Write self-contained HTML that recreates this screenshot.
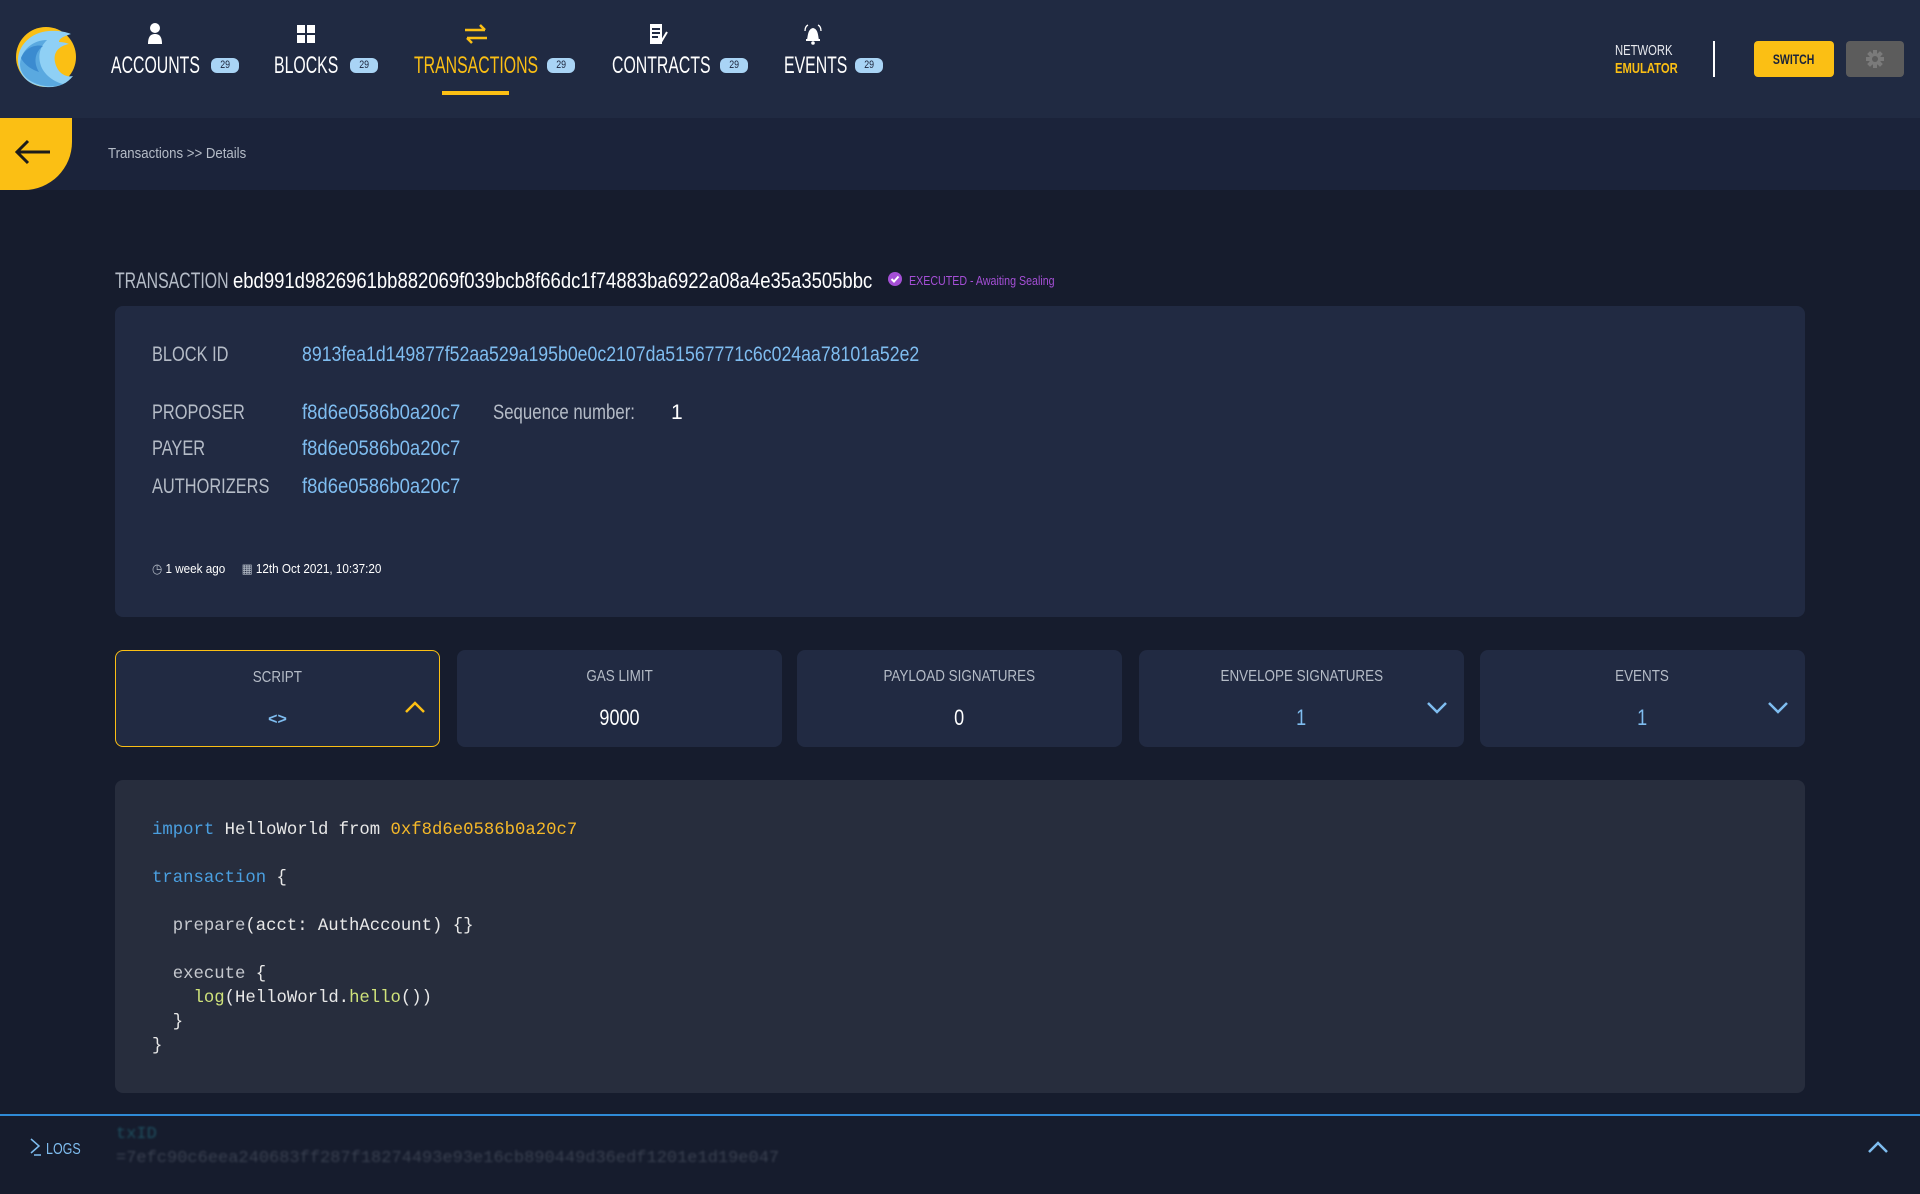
<!DOCTYPE html>
<html><head><meta charset="utf-8">
<style>
*{margin:0;padding:0;box-sizing:border-box}
body{width:1920px;height:1194px;background:#161c2d;overflow:hidden;position:relative;font-family:"Liberation Sans",sans-serif;color:#fff}
.abs{position:absolute;white-space:nowrap}
.s{display:inline-block;transform-origin:left center;white-space:nowrap}
.c{display:inline-block;transform-origin:center center;white-space:nowrap}
.hdr{left:0;top:0;width:1920px;height:118px;background:#202a42}
.bc{left:0;top:118px;width:1920px;height:72px;background:#1b233a}
.nav{top:52px;font-size:24px;color:#fff}
.nav .s{transform:scaleX(.66)}
.bd{top:58px;width:28px;height:15px;background:#a9d4f5;color:#1b233a;font-size:11px;border-radius:6px;text-align:center;line-height:15px}
.bd span{display:inline-block;transform:scaleX(.8)}
.ico{top:22px}
.card{background:#212a42;border-radius:8px}
.lbl{color:#b5bcc7;font-size:21px}
.lbl .s{transform:scaleX(.78)}
.val{color:#7fbdf0;font-size:21px}
.val .s{transform:scaleX(.88)}
.tab{top:650px;width:325px;height:97px;background:#212a42;border-radius:8px;text-align:center}
.tab .t{position:absolute;top:18px;width:100%;color:#b5bcc7;font-size:16px}
.tab .t .c{transform:scaleX(.84)}
.tab .v{position:absolute;top:55px;width:100%;font-size:22px}
.tab .v .c{transform:scaleX(.82)}
.code{font-family:"Liberation Mono","DejaVu Sans Mono",monospace;font-size:17.3px;color:#e8e8e8;line-height:24px;white-space:pre}
.kw{color:#4a9fe0}.st{color:#f5b829}.fn{color:#cfe27a}.dim{color:#c5c8ce}
</style></head><body>
<div class="abs hdr"></div>
<div class="abs bc"></div>
<svg class="abs" style="left:15px;top:26px" width="62" height="62" viewBox="0 0 62 62">
<circle cx="31" cy="31" r="30" fill="#fbbf14"/>
<path d="M3 36 C2 20 16 6 34 5 C48 4 56 8 56 8 C50 10 44 12 44 16 C50 16 54 18 54 18 C44 20 38 26 40 36 C42 46 50 52 58 50 C52 58 42 62 31 61 C14 60 4 50 3 36Z" fill="#8fd0f5"/>
<path d="M5 38 C6 24 18 14 32 14 C26 20 22 28 26 40 C30 50 40 56 48 58 C40 62 24 61 14 54 C8 50 5 44 5 38Z" fill="#5aa9e0"/>
<path d="M6 32 C10 22 20 18 28 20 C20 26 18 36 24 46 C18 44 10 40 6 32Z" fill="#3b8bd0"/>
</svg>
<svg class="abs ico" style="left:145px" width="20" height="22" viewBox="0 0 20 22"><circle cx="10" cy="6" r="5" fill="#fff"/><path d="M3 22 C3 14 6 12 10 12 C14 12 17 14 17 22Z" fill="#fff"/></svg>
<svg class="abs ico" style="left:297px;top:25px" width="18" height="18" viewBox="0 0 18 18" fill="#fff"><rect x="0" y="0" width="8" height="8"/><rect x="10" y="0" width="8" height="8"/><rect x="0" y="10" width="8" height="8"/><rect x="10" y="10" width="8" height="8"/></svg>
<svg class="abs ico" style="left:463px;top:24px" width="26" height="20" viewBox="0 0 26 20" fill="none" stroke="#fbbf14" stroke-width="2.5"><path d="M2 6 H22 M17 1 L22 6"/><path d="M24 14 H4 M9 19 L4 14"/></svg>
<svg class="abs ico" style="left:649px;top:24px" width="20" height="22" viewBox="0 0 20 22"><rect x="1" y="0" width="12" height="20" fill="#fff"/><rect x="3" y="4" width="8" height="2" fill="#202a42"/><rect x="3" y="8" width="8" height="2" fill="#202a42"/><rect x="3" y="12" width="6" height="2" fill="#202a42"/><path d="M12 18 L18 8" stroke="#fff" stroke-width="2"/></svg>
<svg class="abs ico" style="left:802px;top:23px" width="22" height="22" viewBox="0 0 22 22"><path d="M5 17 C6 12 6 6 11 5 C16 6 16 12 17 17Z" fill="#fff"/><rect x="4" y="16" width="14" height="2" fill="#fff"/><circle cx="11" cy="20" r="1.8" fill="#fff"/><path d="M3 8 C3 5 4 3 6 2 M19 8 C19 5 18 3 16 2" stroke="#fff" stroke-width="1.3" fill="none"/></svg>
<div class="abs nav" style="left:111px"><span class="s">ACCOUNTS</span></div>
<div class="abs bd" style="left:211px"><span>29</span></div>
<div class="abs nav" style="left:274px"><span class="s">BLOCKS</span></div>
<div class="abs bd" style="left:350px"><span>29</span></div>
<div class="abs nav" style="left:414px;color:#fbbf14"><span class="s">TRANSACTIONS</span></div>
<div class="abs bd" style="left:547px"><span>29</span></div>
<div class="abs nav" style="left:612px"><span class="s">CONTRACTS</span></div>
<div class="abs bd" style="left:720px"><span>29</span></div>
<div class="abs nav" style="left:784px"><span class="s">EVENTS</span></div>
<div class="abs bd" style="left:855px"><span>29</span></div>
<div class="abs" style="left:442px;top:91px;width:67px;height:4px;background:#fbbf14"></div>
<div class="abs" style="left:1615px;top:42px;font-size:15px;line-height:18px;color:#e8eaef"><span class="s" style="transform:scaleX(.75)">NETWORK</span><br><span class="s" style="transform:scaleX(.75);color:#fbbf14;font-weight:bold">EMULATOR</span></div>
<div class="abs" style="left:1713px;top:41px;width:2px;height:36px;background:#fff"></div>
<div class="abs" style="left:1754px;top:41px;width:80px;height:36px;background:#fbbf14;border-radius:4px;color:#1b233a;font-size:14px;text-align:center;line-height:36px;font-weight:bold"><span class="c" style="transform:scaleX(.75)">SWITCH</span></div>
<div class="abs" style="left:1846px;top:41px;width:58px;height:36px;background:#5c5c5c;border-radius:4px"></div>
<svg class="abs" style="left:1865px;top:49px" width="20" height="20" viewBox="0 0 20 20"><circle cx="10" cy="10" r="6" fill="#7a7a7a"/><g stroke="#7a7a7a" stroke-width="4"><path d="M10 1V19M1 10H19M3.6 3.6L16.4 16.4M16.4 3.6L3.6 16.4"/></g><circle cx="10" cy="10" r="3" fill="#5c5c5c"/></svg>
<div class="abs" style="left:0;top:118px;width:72px;height:72px;background:#fbbf14;border-bottom-right-radius:48px"></div>
<svg class="abs" style="left:14px;top:139px" width="38" height="26" viewBox="0 0 38 26" fill="none" stroke="#1b1b1b" stroke-width="3"><path d="M36 13H3 M14 2 L3 13 L14 24"/></svg>
<div class="abs" style="left:108px;top:145px;font-size:15px;color:#b5bcc7"><span class="s" style="transform:scaleX(.88)">Transactions &gt;&gt; Details</span></div>
<div class="abs" style="left:115px;top:268px;font-size:22px;color:#b5bcc7"><span class="s" style="transform:scaleX(.72)">TRANSACTION</span></div>
<div class="abs" style="left:233px;top:268px;font-size:22px"><span class="s" style="transform:scaleX(.84)">ebd991d9826961bb882069f039bcb8f66dc1f74883ba6922a08a4e35a3505bbc</span></div>
<svg class="abs" style="left:888px;top:272px" width="14" height="14" viewBox="0 0 14 14"><circle cx="7" cy="7" r="7" fill="#a54fd6"/><path d="M3.5 7 L6 9.5 L10.5 4.5" stroke="#fff" stroke-width="2" fill="none"/></svg>
<div class="abs" style="left:909px;top:273px;font-size:13px;color:#a54fd6"><span class="s" style="transform:scaleX(.82)">EXECUTED - Awaiting Sealing</span></div>
<div class="abs card" style="left:115px;top:306px;width:1690px;height:311px"></div>
<div class="abs lbl" style="left:152px;top:343px"><span class="s">BLOCK ID</span></div>
<div class="abs val" style="left:302px;top:343px"><span class="s" style="transform:scaleX(.843)">8913fea1d149877f52aa529a195b0e0c2107da51567771c6c024aa78101a52e2</span></div>
<div class="abs lbl" style="left:152px;top:401px"><span class="s">PROPOSER</span></div>
<div class="abs val" style="left:302px;top:401px"><span class="s">f8d6e0586b0a20c7</span></div>
<div class="abs lbl" style="left:493px;top:401px"><span class="s" style="transform:scaleX(.8)">Sequence number:</span></div>
<div class="abs" style="left:671px;top:401px;font-size:21px">1</div>
<div class="abs lbl" style="left:152px;top:437px"><span class="s">PAYER</span></div>
<div class="abs val" style="left:302px;top:437px"><span class="s">f8d6e0586b0a20c7</span></div>
<div class="abs lbl" style="left:152px;top:475px"><span class="s">AUTHORIZERS</span></div>
<div class="abs val" style="left:302px;top:475px"><span class="s">f8d6e0586b0a20c7</span></div>
<div class="abs" style="left:152px;top:561px;font-size:13px;color:#fff"><span class="s" style="transform:scaleX(.9)"><span style="color:#b5bcc7">&#9719;</span> 1 week ago &nbsp;&nbsp;&nbsp; <span style="color:#b5bcc7">&#9638;</span> 12th Oct 2021, 10:37:20</span></div>
<div class="abs tab" style="left:115px;border:1.5px solid #fbbf14"><div class="t"><span class="c">SCRIPT</span></div><div class="v" style="color:#7fbdf0;font-size:16px;top:60px;font-weight:bold">&lt;&gt;</div>
<svg class="abs" style="left:288px;top:49px" width="22" height="14" viewBox="0 0 22 14" fill="none" stroke="#fbbf14" stroke-width="2.5"><path d="M2 12 L11 3 L20 12"/></svg></div>
<div class="abs tab" style="left:457px"><div class="t"><span class="c">GAS LIMIT</span></div><div class="v"><span class="c">9000</span></div></div>
<div class="abs tab" style="left:797px"><div class="t"><span class="c">PAYLOAD SIGNATURES</span></div><div class="v"><span class="c">0</span></div></div>
<div class="abs tab" style="left:1139px"><div class="t"><span class="c">ENVELOPE SIGNATURES</span></div><div class="v" style="color:#7fbdf0"><span class="c">1</span></div>
<svg class="abs" style="left:287px;top:51px" width="22" height="14" viewBox="0 0 22 14" fill="none" stroke="#7fbdf0" stroke-width="2.5"><path d="M2 2 L11 11 L20 2"/></svg></div>
<div class="abs tab" style="left:1480px"><div class="t"><span class="c">EVENTS</span></div><div class="v" style="color:#7fbdf0"><span class="c">1</span></div>
<svg class="abs" style="left:287px;top:51px" width="22" height="14" viewBox="0 0 22 14" fill="none" stroke="#7fbdf0" stroke-width="2.5"><path d="M2 2 L11 11 L20 2"/></svg></div>
<div class="abs" style="left:115px;top:780px;width:1690px;height:313px;background:#272d3d;border-radius:8px"></div>
<div class="abs code" style="left:152px;top:819px"><span class="kw">import</span> HelloWorld from <span class="st">0xf8d6e0586b0a20c7</span>
<div style="height:24px"></div><span class="kw">transaction</span> {
<div style="height:24px"></div>  <span class="dim">prepare</span>(acct: AuthAccount) {}
<div style="height:24px"></div>  <span class="dim">execute</span> {
    <span class="fn">log</span>(HelloWorld.<span class="fn">hello</span>())
  }
}</div>
<div class="abs" style="left:0;top:1114px;width:1920px;height:2px;background:#2f8ad6"></div>
<svg class="abs" style="left:30px;top:1138px" width="12" height="18" viewBox="0 0 12 18" fill="none" stroke="#7fbdf0" stroke-width="1.5"><path d="M1 1 L9 8 L1 15 M4 17 H11"/></svg>
<div class="abs" style="left:46px;top:1141px;color:#7fbdf0;font-size:16px"><span class="s" style="transform:scaleX(.78)">LOGS</span></div>
<div class="abs" style="left:116px;top:1125px;font-family:'Liberation Mono',monospace;font-size:17px;color:#1f5060;filter:blur(1px)">txID</div>
<div class="abs" style="left:116px;top:1149px;font-family:'Liberation Mono',monospace;font-size:17px;color:#3b4252;filter:blur(1px)">=7efc90c6eea240683ff287f18274493e93e16cb890449d36edf1201e1d19e047</div>
<svg class="abs" style="left:1867px;top:1140px" width="22" height="14" viewBox="0 0 22 14" fill="none" stroke="#7fbdf0" stroke-width="2.5"><path d="M2 12 L11 3 L20 12"/></svg>
</body></html>
